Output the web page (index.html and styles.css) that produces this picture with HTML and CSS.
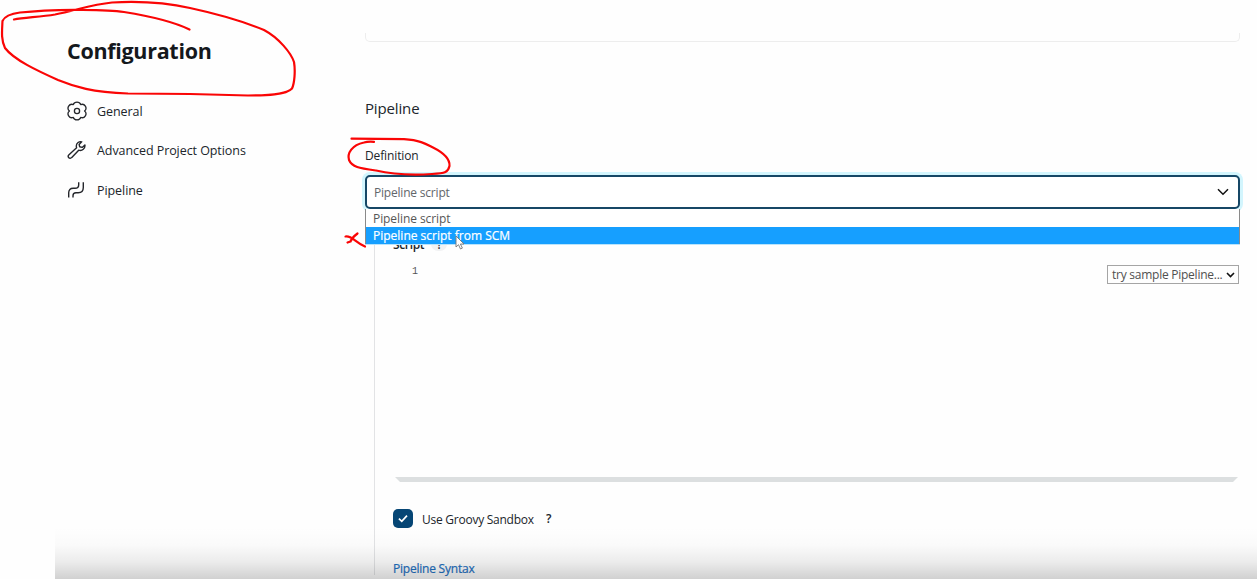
FILE: index.html
```html
<!DOCTYPE html>
<html lang="en">
<head>
<meta charset="utf-8">
<title>Configuration</title>
<link rel="stylesheet" href="styles.css">
</head>
<body>
<div class="page">
  <aside class="sidebar">
    <h1 class="title"><span>Configuration</span></h1>
    <nav class="nav">
      <a class="nav-item"><svg class="icon gear" viewBox="0 0 20 20"><path d="M6.300 3.600A3.900 3.500 0 0 1 13.700 3.600A3.800 3.800 0 0 1 17.600 10A3.800 3.800 0 0 1 13.700 16.400A3.900 3.500 0 0 1 6.300 16.400A3.800 3.800 0 0 1 2.400 10A3.800 3.800 0 0 1 6.300 3.600z"/><circle cx="10" cy="10" r="2.600"/></svg><span class="t-general">General</span></a>
      <a class="nav-item raised"><svg class="icon" viewBox="0 0 20 20"><path d="M14.700 1.800c-2.500-.7-5.400 1.300-5.400 4.100 0 .8.100 1.300.3 1.900L2 14.700c-1.100 1.100-.9 2.300-.2 3s2 .8 3-.3l6.900-7.200c3.500 1.100 6.700-1.700 6.200-5.300l-2.700 2.500-2.500-.6-.6-2.400z"/></svg><span class="t-advanced">Advanced Project Options</span></a>
      <a class="nav-item"><svg class="icon" viewBox="0 0 20 20"><path d="M1.700 17.500v-4.700Q1.700 8.300 6.200 8.300H8Q11.700 8.300 11.700 4.700V2.200M6 17.500v-1.800Q6 12.700 9 12.700h2.200Q16.300 12.700 16.300 7.500V2.200"/></svg><span class="t-pipe">Pipeline</span></a>
    </nav>
  </aside>
  <main class="main">
    <div class="previous-card"></div>
    <h2 class="section-title"><span>Pipeline</span></h2>
    <div class="label"><span>Definition</span></div>
    <div class="select-wrap">
      <div class="select"><span>Pipeline script</span><svg class="chevron" viewBox="0 0 12 8"><path d="M1 1.200 6 6.200 11 1.200"/></svg></div>
      <div class="menu">
        <div class="option"><span>Pipeline script</span></div>
        <div class="option selected"><span>Pipeline script from SCM</span></div>
      </div>
    </div>
    <div class="definition-body">
      <div class="script-label"><span>Script</span><span class="help dim">?</span></div>
      <div class="editor">
        <span class="line-number">1</span>
        <div class="sample"><span>try sample Pipeline...</span><svg class="sample-chevron" viewBox="0 0 9 6"><path d="M1 1 4.500 4.500 8 1"/></svg></div>
      </div>
      <div class="resizer"></div>
      <div class="sandbox">
        <div class="checkbox"><svg viewBox="0 0 20 20"><path d="M5.700 10.200 8.700 13 14.200 7"/></svg></div>
        <span class="sandbox-text">Use Groovy Sandbox</span><span class="help">?</span>
      </div>
      <a class="syntax"><span>Pipeline Syntax</span></a>
    </div>
  </main>
</div>
<div class="shade"></div>
<svg class="cursor" viewBox="0 0 10 16"><path d="M1 1v11l2.500-2.300 2 4.300 1.900-.9-2-4.100H9z"/></svg>
<svg class="marks" viewBox="0 0 1257 579">
  <path d="M14 19.500C24 17.500 40 17 55 14.500C76 10.500 91 4.500 112 2.500C140 1 168 3 190 8C220 14.500 246 22.500 264 30C279 38 291 53 294 62C295.500 71 294.500 83 292 88.500C286 95 266 95.500 248 95.500C220 94.500 190 93.500 128 93.500C92 92 75 87 58 80C38 71 14 60 5 48C1 40 2 31 2.500 21C5 15.500 12 13.500 20 12.500C38 10.500 54 10 75 9.800C94 10 110 9.800 124 12C149 16 172 21 189.500 29.500"/>
  <path d="M351.500 138.700L404 139.200C422 140.500 427 144.500 433 147.500C446 154 450 160 449.500 166C448 172 446 173.500 432 174C408 175.500 391 174 376 170.500C359 168 352 167 349 160C347 153 352 145 364 142.500Q368 141.300 374 141.800"/>
  <path d="M345.500 236.500C352 235.500 355 242 365 246.500M347.500 242.500L350.500 241.500Q352 237.500 357.500 233.500"/>
</svg>
</body>
</html>
```
FILE: styles.css
```css
* { box-sizing: border-box; }
body {
  margin: 0;
  width: 1257px;
  height: 579px;
  overflow: hidden;
  position: relative;
  background: #fefefe;
  color: #20252b;
  font-family: "Open Sans", "Noto Sans", sans-serif;
  font-size: 12px;
}
h1, h2 { margin: 0; }
span { white-space: nowrap; }
.page { display: flex; height: 579px; }
.sidebar { width: 365px; padding: 33px 0 0 67px; }
.title { font-size: 21.500px; line-height: 36px; font-weight: 700; letter-spacing: -.3px; color: #14181c; }
.nav { margin-top: 22px; }
.nav-item { display: flex; align-items: center; gap: 10px; height: 39.800px; font-size: 12.500px; letter-spacing: -.07px; }
.nav-item span { padding-top: 1px; }
.nav-item.raised { padding-bottom: 2px; }
.icon { width: 20px; height: 20px; fill: none; stroke: #24262b; stroke-width: 1.400; stroke-linejoin: round; }
.gear { stroke-width: 1.300; }
.main { width: 875px; padding-top: 33px; }
.previous-card { height: 9px; border: 1px solid #ededed; border-top: 0; border-radius: 0 0 5px 5px; }
.section-title { margin-top: 54px; line-height: 24px; font-size: 15px; font-weight: 400; letter-spacing: -.15px; }
.label { margin-top: 26px; line-height: 20px; font-size: 12px; letter-spacing: -.12px; }
.select-wrap { position: relative; margin-top: 9px; }
.select {
  display: flex;
  align-items: center;
  justify-content: space-between;
  height: 34px;
  padding: 0 9px 0 7px;
  border: 2px solid #164766;
  border-radius: 5px;
  background: #fff;
  box-shadow: 0 0 0 3px #d2f5fd;
  color: #62666a;
  letter-spacing: -.2px;
}
.chevron { width: 12px; height: 8px; fill: none; stroke: #111; stroke-width: 1.500; }
.menu {
  position: absolute;
  z-index: 2;
  top: 34px;
  left: 0;
  width: 875px;
  border: 1px solid #8a8a8a;
  border-width: 0 1px;
  background: #fff;
  box-shadow: 0 1px 0 #b9e4fc;
}
.option { height: 18px; padding-left: 7px; line-height: 19px; color: #565656; letter-spacing: -.08px; }
.option.selected { height: 17px; line-height: 18px; background: #169fff; color: #fff; letter-spacing: 0; -webkit-text-stroke: .2px #fff; }
.definition-body { margin: 36px 0 0 9px; height: 338px; padding-left: 18px; border-left: 1px solid #e2e3e5; }
.script-label { display: flex; gap: 7px; height: 14px; line-height: 15px; margin-top: -8px; font-weight: 600; letter-spacing: -.35px; }
.help { font-weight: 600; font-size: 12px; }
.dim { width: 16px; height: 14px; border-radius: 7px; background: #f1f2f3; color: #333; text-align: center; }
.editor { display: flex; justify-content: space-between; height: 226px; padding: 14px 1px 0 19px; }
.line-number { font-family: "Liberation Mono", monospace; font-size: 10px; line-height: 13px; color: #555; }
.sample { display: flex; align-items: center; justify-content: space-between; width: 132px; height: 19px; padding: 0 3px 0 4px; border: 1px solid #a5a5a5; color: #505050; letter-spacing: -.25px; }
.sample-chevron { flex: none; width: 9px; height: 6px; fill: none; stroke: #111; stroke-width: 1.600; }
.resizer { height: 5px; margin: 0 2px; background: #dcdfe0; clip-path: polygon(0 0, 100% 0, calc(100% - 5px) 100%, 5px 100%); }
.sandbox { display: flex; align-items: center; margin-top: 27px; height: 19px; }
.checkbox { width: 20px; height: 19px; border-radius: 5px; background: #064675; margin-right: 9px; }
.checkbox svg { display: block; width: 20px; height: 19px; fill: none; stroke: #fff; stroke-width: 1.800; }
.sandbox-text { width: 124px; padding-top: 1px; letter-spacing: -.25px; }
.syntax { display: block; margin-top: 31px; line-height: 20px; color: #1e70c1; letter-spacing: -.22px; -webkit-text-stroke: .2px #1e70c1; }
.shade {
  position: absolute;
  left: 55px;
  right: 0;
  bottom: 0;
  height: 52px;
  background: linear-gradient(rgba(0,0,0,0), rgba(0,0,0,.015) 35%, rgba(0,0,0,.075) 68%, rgba(0,0,0,.18));
}
.cursor { position: absolute; z-index: 3; left: 455px; top: 235px; width: 10px; height: 16px; fill: #fff; stroke: #777; stroke-width: .9; }
.marks { position: absolute; z-index: 4; inset: 0; width: 1257px; height: 579px; fill: none; stroke: #fa0505; stroke-width: 2.200; stroke-linecap: round; stroke-linejoin: round; }
```
